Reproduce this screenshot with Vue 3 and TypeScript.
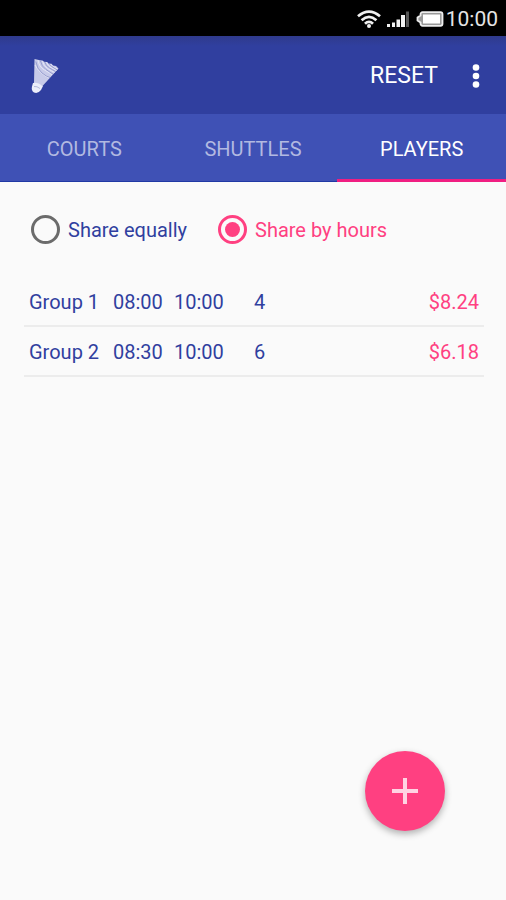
<script setup lang="ts">
import { computed, ref } from 'vue'

type Tab = 'Courts' | 'Shuttles' | 'Players'
type ShareMode = 'equal' | 'hours'

interface Group {
  name: string
  start: string
  end: string
  players: number
  cost: number
}

const tabs: Tab[] = ['Courts', 'Shuttles', 'Players']
const activeTab = ref<Tab>('Players')

const modes: { value: ShareMode; label: string }[] = [
  { value: 'equal', label: 'Share equally' },
  { value: 'hours', label: 'Share by hours' },
]
const mode = ref<ShareMode>('hours')

const groups = ref<Group[]>([
  { name: 'Group 1', start: '08:00', end: '10:00', players: 4, cost: 8.24 },
  { name: 'Group 2', start: '08:30', end: '10:00', players: 6, cost: 6.18 },
])

const rows = computed(() => groups.value.map((g) => ({ ...g, price: `$${g.cost.toFixed(2)}` })))

function reset(): void {
  mode.value = 'equal'
  groups.value = []
}

function addGroup(): void {
  groups.value.push({
    name: `Group ${groups.value.length + 1}`,
    start: '08:00',
    end: '10:00',
    players: 4,
    cost: 0,
  })
}
</script>

<template>
  <div class="app">
    <div class="status">
      <svg class="wifi" viewBox="0 0 24 18" aria-hidden="true">
        <path d="M1 6.200Q12-3 23 6.200M4.600 10.200Q12 3.600 19.400 10.200M8 13.800Q12 10 16 13.800" />
        <circle cx="12" cy="16" r="2" />
      </svg>
      <svg class="signal" viewBox="0 0 24 18" aria-hidden="true">
        <path d="M1 14h3v3H1zM6 12.500h3V17H6zM10.500 9.500H14V17h-3.500zM15 5h4v12h-4z" />
        <path class="dim" d="M20 1.500h3V17h-3z" />
      </svg>
      <svg class="battery" viewBox="0 0 28 16" aria-hidden="true">
        <path class="case" d="M6.500 1.200h18a2 2 0 0 1 2 2v9.600a2 2 0 0 1-2 2h-18a2 2 0 0 1-2-2v-1.300L1.500 9.500v-3l3-2V3.200a2 2 0 0 1 2-2z" />
        <path class="charge" d="M7 3.500h17v9H7z" />
      </svg>
      <span>10:00</span>
    </div>

    <header class="toolbar">
      <svg class="logo" viewBox="0 0 28 36" aria-hidden="true">
        <path class="skirt" d="M3.500 1L9 2.200l2.500.3 1.500 1.300 3 .2 1.500 1.500 3 .3 1.500 1.700 3 .5L27.500 10.500 11.500 28 3 25z" />
        <path class="feather" d="M7 2Q8 9 13.500 12T21 17M11.500 3Q12.500 8 16.500 10.500T23.500 14.500M15.500 4Q17 8 20 9.500T25.500 12.500M19.500 6Q21 8.500 26.500 11M4 7Q8 15 18 20" />
        <path class="gap" d="M4.800 3.500Q6 11 11 15T19 19.500M9.500 3Q10.500 8.500 15 11.500T22 16M13.700 4Q15 8 18.500 10T24.500 13.500M17.700 5.500Q19 8 26 11.800" />
        <path class="cork" d="M2 25Q6 23.500 12 28L10 32Q7 36 3 34.500Q0 32.500 1 28.500z" />
        <path class="band" d="M3 28.500Q6 28 9 30.500" />
      </svg>
      <button class="reset" type="button" @click="reset">RESET</button>
      <button class="more" type="button" aria-label="More options">
        <svg viewBox="0 0 8 26" aria-hidden="true">
          <circle cx="4" cy="4.500" r="3.300" />
          <circle cx="4" cy="13" r="3.300" />
          <circle cx="4" cy="21.500" r="3.300" />
        </svg>
      </button>
    </header>

    <nav class="tabs" role="tablist">
      <button
        v-for="tab in tabs"
        :key="tab"
        class="tab"
        :class="{ active: tab === activeTab }"
        type="button"
        role="tab"
        :aria-selected="tab === activeTab"
        @click="activeTab = tab"
      >
        {{ tab.toUpperCase() }}
      </button>
    </nav>

    <main class="content">
      <div class="modes" role="radiogroup" aria-label="Cost sharing">
        <label v-for="m in modes" :key="m.value" class="mode" :class="{ chosen: m.value === mode }">
          <input v-model="mode" type="radio" name="mode" :value="m.value" />
          <span>{{ m.label }}</span>
        </label>
      </div>

      <table class="groups" aria-label="Groups">
        <tbody>
          <tr v-for="row in rows" :key="row.name">
            <td class="name">{{ row.name }}</td>
            <td class="start">{{ row.start }}</td>
            <td class="end">{{ row.end }}</td>
            <td>{{ row.players }}</td>
            <td class="price">{{ row.price }}</td>
          </tr>
        </tbody>
      </table>
    </main>

    <button class="fab" type="button" aria-label="Add group" @click="addGroup">
      <svg viewBox="0 0 26 26" aria-hidden="true">
        <path d="M13 0v26M0 13h26" />
      </svg>
    </button>
  </div>
</template>

<style>
body {
  margin: 0;
  background: #fafafa;
}
</style>

<style scoped>
.app {
  min-height: 100vh;
  background: #fafafa;
  color: #303f9f;
  font-family: Roboto, 'Liberation Sans', sans-serif;
  font-size: 20px;
  line-height: 24px;
}

button {
  margin: 0;
  padding: 0;
  border: 0;
  background: none;
  color: inherit;
  font: inherit;
  cursor: pointer;
}

svg {
  display: block;
}

.status {
  display: flex;
  align-items: center;
  justify-content: flex-end;
  height: 36px;
  padding: 2px 8px 0 0;
  box-sizing: border-box;
  background: #000;
  color: #e4e4e4;
  font-size: 21px;
}

.wifi {
  width: 24px;
  height: 18px;
  margin-right: 5px;
  fill: #f0f0f0;
}

.wifi path {
  fill: none;
  stroke: #f0f0f0;
  stroke-width: 2.8;
}

.signal {
  width: 24px;
  height: 18px;
  margin-right: 6px;
  fill: #f0f0f0;
}

.signal .dim {
  fill: #555;
}

.battery {
  width: 28px;
  height: 16px;
  margin-right: 2px;
}

.case {
  fill: #999;
  stroke: #eee;
  stroke-width: 1.8;
}

.charge {
  fill: #fff;
}

.toolbar {
  display: flex;
  align-items: center;
  height: 78px;
  padding: 2px 20px 0 31px;
  box-sizing: border-box;
  background: linear-gradient(#2f3a8c, #303f9f 10px);
  color: #fff;
}

.logo {
  width: 28px;
  height: 36px;
}

.skirt {
  fill: #c8cbe9;
}

.feather {
  fill: none;
  stroke: #e4e6f6;
  stroke-width: 1;
}

.gap {
  fill: none;
  stroke: #8a92c8;
  stroke-width: 0.8;
}

.cork {
  fill: #eceefa;
}

.band {
  fill: none;
  stroke: #b4badc;
  stroke-width: 1;
}

.reset {
  margin-left: auto;
  font-size: 23px;
}

.more {
  display: flex;
  justify-content: center;
  width: 20px;
  margin-left: 28px;
}

.more svg {
  width: 8px;
  height: 26px;
  fill: #fff;
}

.tabs {
  display: grid;
  grid-template-columns: repeat(3, 1fr);
  height: 68px;
  background: #3f51b5;
}

.tab {
  border-top: 3px solid transparent;
  border-bottom: 1px solid #2038a4;
  color: #b2b9e1;
}

.tab.active {
  border-top-width: 5px;
  border-bottom: 3px solid #f01e82;
  color: #fff;
}

.content {
  padding: 27px 22px 0 24px;
}

.modes {
  display: flex;
  gap: 24px;
  padding: 0 7px;
}

.mode {
  display: flex;
  align-items: center;
  gap: 8px;
  height: 40px;
  min-width: 163px;
  cursor: pointer;
}

.mode span {
  padding-top: 2px;
}

.mode.chosen {
  color: #ff4081;
}

.mode input {
  display: grid;
  place-items: center;
  width: 29px;
  height: 29px;
  margin: 0;
  border: 3px solid #6b6b6b;
  border-radius: 50%;
  box-sizing: border-box;
  appearance: none;
  cursor: pointer;
}

.mode input:checked {
  border-color: #ff4081;
}

.mode input:checked::before {
  content: '';
  width: 15px;
  height: 15px;
  border-radius: 50%;
  background: #ff4081;
}

.groups {
  width: 100%;
  margin-top: 27px;
  border-collapse: collapse;
  table-layout: fixed;
}

.groups td {
  height: 50px;
  padding: 2px 5px 0;
  box-sizing: border-box;
  border-bottom: 2px solid #ececec;
}

.groups .name {
  width: 84px;
}

.groups .start {
  width: 61px;
}

.groups .end {
  width: 80px;
}

.groups .price {
  color: #ff4081;
  text-align: right;
}

.fab {
  position: fixed;
  right: 61px;
  bottom: 69px;
  display: grid;
  place-items: center;
  width: 80px;
  height: 80px;
  border-radius: 50%;
  background: #ff4081;
  box-shadow: 0 3px 7px rgba(0, 0, 0, 0.3);
}

.fab svg {
  width: 26px;
  height: 26px;
  fill: none;
  stroke: #ffd3e2;
  stroke-width: 4;
}
</style>
